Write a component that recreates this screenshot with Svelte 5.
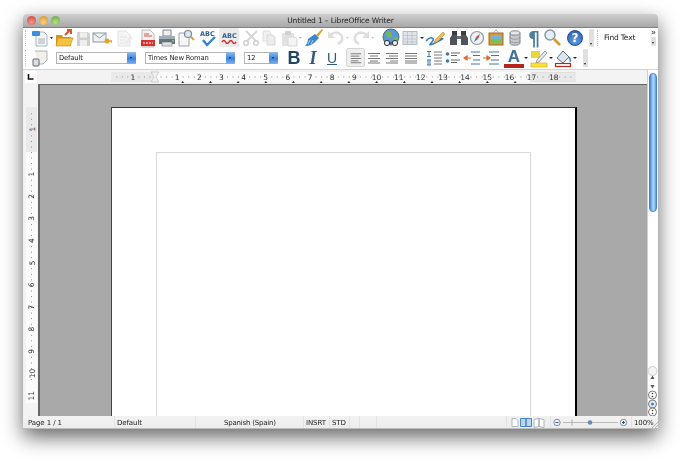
<script>
  const unit = 22.15;
  const hLabels = Array.from({ length: 18 }, (_, i) => i + 1);
  const vLabels = Array.from({ length: 11 }, (_, i) => i + 1);
  const hDots = Array.from({ length: 84 }, (_, i) => i * (unit / 4) + 118 - unit * 2);
  const vDots = Array.from({ length: 50 }, (_, i) => i * (unit / 4) + 68 - unit * 2);
  const tabs = Array.from({ length: 13 }, (_, i) => 118 + 27.7 * (i + 1));
</script>

<div class="desk">
  <div class="window">
    <header class="titlebar">
      <div class="lights">
        <span class="light red"></span>
        <span class="light yellow"></span>
        <span class="light green"></span>
      </div>
      <span class="title">Untitled 1 – LibreOffice Writer</span>
    </header>

    <div class="toolbar one">
      <span class="grip"></span>
      <svg width="18" height="20" viewBox="0 0 18 20"><path d="M5 4h8l3 3v11H5z" fill="#f4f6f8" stroke="#98a4b0" stroke-width=".8"/><path d="M7 11h7M7 13h7M7 15h7" stroke="#a8b2bc"/><rect x="1" y="3" width="8" height="5" rx="1" fill="#3b90dc"/></svg>
      <svg class="drop" width="5" height="20" viewBox="0 0 5 20"><path d="M1 9h3l-1.500 2z" fill="#222"/></svg>
      <svg width="20" height="20" viewBox="0 0 20 20"><path d="M2 7h6l1 2h8v9H2z" fill="#d6951f"/><path d="M4 10h15l-3 8H2z" fill="#f3c23e" stroke="#c88a18" stroke-width=".6"/><path d="M11 7l5-5M13 2h4v4" stroke="#d9552a" stroke-width="2" fill="none"/></svg>
      <svg width="18" height="20" viewBox="0 0 18 20"><path d="M3 4h11l2 2v12H3z" fill="#cfcfcf"/><rect x="6" y="4.500" width="7" height="5" fill="#f0f0f0"/><rect x="6" y="12" width="7" height="6" fill="#efefef"/></svg>
      <svg width="20" height="20" viewBox="0 0 20 20"><rect x="1" y="5" width="13" height="9" fill="#eef1f4" stroke="#8e9aa6"/><path d="M1 5l6.500 5L14 5" fill="none" stroke="#8e9aa6"/><circle cx="15" cy="13" r="2.500" fill="#e2a520"/><path d="M15 13h5v2" stroke="#e2a520" stroke-width="1.500" fill="none"/></svg>
      <svg class="m2" width="20" height="20" viewBox="0 0 20 20"><path d="M4 3h8l4 4v11H4z" fill="#f5f5f5" stroke="#e2e2e2"/><path d="M6 9h7M6 12h5M6 15h4" stroke="#e4e4e4"/><path d="M10 15l7-7 2 2-7 7z" fill="#ececec"/></svg>
      <svg class="m5" width="18" height="20" viewBox="0 0 18 20"><path d="M3 2h8l4 4v13H3z" fill="#f2f2f2" stroke="#aaa" stroke-width=".8"/><path d="M5 6h5M5 8h8" stroke="#c55"/><rect x="2" y="12" width="14" height="6" fill="#d8302a"/><path d="M4 15h10" stroke="#fff" stroke-dasharray="2 1"/></svg>
      <svg width="20" height="20" viewBox="0 0 20 20"><path d="M6 2h8v6H6z" fill="#eef0f2" stroke="#7d8790"/><path d="M2 8h16v8H2z" fill="#68737c"/><rect x="2" y="8" width="16" height="3" fill="#a2acb4"/><rect x="5" y="14" width="10" height="4" fill="#dfe2e4" stroke="#69727a" stroke-width=".6"/><rect x="15" y="12" width="2" height="1.500" fill="#7ed14c"/></svg>
      <svg width="18" height="20" viewBox="0 0 18 20"><path d="M2 5h7l3 3v10H2z" fill="#f6f6f6" stroke="#9aa2aa"/><circle cx="11" cy="6" r="3.500" fill="#d8e8f4" stroke="#7c8894" stroke-width="1.200"/><path d="M13.500 8.500L17 12" stroke="#d9a52a" stroke-width="2"/></svg>
      <svg class="m2" width="22" height="20" viewBox="0 0 22 20"><text x="3" y="8" class="abc">ABC</text><path d="M6 12l4 5 8-8" fill="none" stroke="#3c82cc" stroke-width="2.400"/></svg>
      <div class="pressed-icon"><svg width="20" height="20" viewBox="0 0 20 20"><text x="3" y="10" class="abc">ABC</text><path d="M3 14q2-3 3.500 0t3.500 0 3.500 0 3.500 0" fill="none" stroke="#d42a22" stroke-width="1.400"/></svg></div>
      <svg class="m2" width="20" height="20" viewBox="0 0 20 20"><path d="M16 3L6 13M5 3l10 10" stroke="#d4d4d4" stroke-width="1.800"/><circle cx="5" cy="15" r="2.300" fill="none" stroke="#cfcfcf" stroke-width="1.400"/><circle cx="15" cy="15" r="2.300" fill="none" stroke="#cfcfcf" stroke-width="1.400"/></svg>
      <svg width="16" height="20" viewBox="0 0 16 20"><path d="M2 3h6l2 2v8H2z" fill="#f1f1f1" stroke="#dcdcdc"/><path d="M6 7h6l2 2v8H6z" fill="#ececec" stroke="#d8d8d8"/></svg>
      <svg class="m2" width="20" height="20" viewBox="0 0 20 20"><rect x="3" y="5" width="12" height="13" rx="1" fill="#e2e2e2"/><rect x="6" y="3" width="6" height="4" rx="1" fill="#d0d0d0"/><path d="M9 9h7l2 2v7H9z" fill="#f4f4f4" stroke="#d6d6d6"/></svg>
      <svg class="drop" width="3" height="20" viewBox="0 0 3 20"><path d="M0 9h3l-1.500 2z" fill="#bbb"/></svg>
      <svg width="22" height="20" viewBox="0 0 22 20"><path d="M14 7l6-6 1 1-5 7z" fill="#d9a436"/><path d="M13 6l4 4-3 3q-4 5-11 5 3-3 3-7z" fill="#3f86cf"/><path d="M8 12l-2 4M11 12l-2 4" stroke="#a9cdf0"/></svg>
      <svg class="m2" width="20" height="20" viewBox="0 0 20 20"><path d="M4 7q7-5 11 0t-3 9" fill="none" stroke="#dedede" stroke-width="2.600"/><path d="M2 3v7h7z" fill="#dedede"/></svg>
      <svg class="drop" width="3" height="20" viewBox="0 0 3 20"><path d="M0 9h3l-1.500 2z" fill="#ccc"/></svg>
      <svg class="m2" width="20" height="20" viewBox="0 0 20 20"><path d="M16 7q-7-5-11 0t3 9" fill="none" stroke="#dedede" stroke-width="2.600"/><path d="M18 3v7h-7z" fill="#dedede"/></svg>
      <svg class="drop" width="3" height="20" viewBox="0 0 3 20"><path d="M0 9h3l-1.500 2z" fill="#ccc"/></svg>
      <svg class="m6" width="22" height="20" viewBox="0 0 22 20"><circle cx="11" cy="9" r="8" fill="#5a9bcf" stroke="#47708e"/><path d="M6 4q5-2 6 2t-5 4zM13 10q5-3 5 1t-4 3z" fill="#79b35a"/><circle cx="7" cy="15" r="2.600" fill="#eee" stroke="#333"/><circle cx="15" cy="15" r="2.600" fill="#eee" stroke="#333"/><path d="M9 15h4" stroke="#333"/></svg>
      <svg width="16" height="20" viewBox="0 0 16 20"><rect x="1" y="3.500" width="14" height="13" fill="#dfe5ea" stroke="#b4bcc4"/><path d="M1 7.500h14M1 11h14M1 14h14M5.500 4v12M10 4v12" stroke="#b4bcc4" stroke-width=".7"/></svg>
      <svg class="m2 drop" width="4" height="20" viewBox="0 0 4 20"><path d="M0 9h4l-2 2z" fill="#222"/></svg>
      <svg width="22" height="20" viewBox="0 0 22 20"><path d="M2 13q3-4 6-3t-1 5 6-1 3-3" fill="none" stroke="#2f7cc8" stroke-width="1.500"/><path d="M11 12l8-8 2 2-8 8-3 1z" fill="#eebd4a" stroke="#b4872c" stroke-width=".5"/></svg>
      <svg class="m2" width="22" height="20" viewBox="0 0 22 20"><rect x="4" y="3" width="5" height="5" fill="#3a3f44"/><rect x="13" y="3" width="5" height="5" fill="#3a3f44"/><path d="M4 7h5v10H2v-7z" fill="#4e5459"/><path d="M18 7h-5v10h7v-7z" fill="#4e5459"/><rect x="9" y="8" width="4" height="3" fill="#6a7075"/></svg>
      <svg width="14" height="20" viewBox="0 0 14 20"><circle cx="7" cy="10" r="6.500" fill="#eef0f2" stroke="#8f9aa4" stroke-width="1.200"/><path d="M10 6L6 9l2 2z" fill="#d3382c"/><path d="M4 14l4-3-2-2z" fill="#3d78c4"/></svg>
      <svg class="m4" width="16" height="20" viewBox="0 0 16 20"><rect x="1" y="5" width="14" height="12" fill="#d8973a" stroke="#a36d20"/><rect x="3" y="7" width="10" height="8" fill="#7cbf54"/><path d="M3 7h10v4H3z" fill="#72b4dc"/><path d="M5 5l3-3 3 3" fill="none" stroke="#999" stroke-width=".7"/></svg>
      <svg class="m3" width="16" height="20" viewBox="0 0 16 20"><path d="M3 5v10c0 3 10 3 10 0V5z" fill="#c6cbcf" stroke="#7f878e"/><ellipse cx="8" cy="5" rx="5" ry="2.200" fill="#e4e7e9" stroke="#7f878e"/><path d="M3 9c0 3 10 3 10 0M3 12.500c0 3 10 3 10 0" fill="none" stroke="#7f878e" stroke-width=".7"/></svg>
      <span class="m3 pilcrow">¶</span>
      <svg class="m1" width="18" height="20" viewBox="0 0 18 20"><circle cx="7" cy="7" r="5" fill="#e4f0f8" stroke="#8a96a2" stroke-width="1.500"/><path d="M11 11l6 6" stroke="#dc9a32" stroke-width="2.600"/></svg>
      <div class="m6 help"><span>?</span></div>
      <span class="m4 more-btn"></span>
      <span class="grip find-grip"></span>
      <span class="find">Find Text</span>
      <div class="overflow"><span class="chev">»</span><span class="more-btn small"></span></div>
    </div>

    <div class="toolbar two">
      <span class="grip wide"></span>
      <svg width="16" height="20" viewBox="0 0 16 20"><path d="M3 3h12v9l-4 4H6" fill="#f1f1ea" stroke="#9aa2aa" stroke-width=".8"/><rect x="1" y="11" width="6" height="7" rx="1" fill="#dce0e4" stroke="#5c6670"/></svg>
      <div class="select style-box"><span>Default</span><i></i></div>
      <div class="select font-box"><span>Times New Roman</span><i></i></div>
      <div class="select size-box"><span>12</span><i></i></div>
      <span class="fmt bold">B</span>
      <span class="fmt italic">I</span>
      <span class="fmt under">U</span>
      <div class="pressed">
        <svg width="18" height="18" viewBox="0 0 18 18"><path d="M4 4.500h11M4 7h9M4 9.500h11M4 12h8M4 14h11" stroke="#777"/></svg>
      </div>
      <svg width="18" height="20" viewBox="0 0 18 20"><path d="M3 5.500h12M5 8h8M3 10.500h12M5 13h8M3 15h12" stroke="#777"/></svg>
      <svg width="18" height="20" viewBox="0 0 18 20"><path d="M3 5.500h12M6 8h9M3 10.500h12M7 13h8M3 15h12" stroke="#777"/></svg>
      <svg width="20" height="20" viewBox="0 0 20 20"><path d="M4 5.500h12M4 8h12M4 10.500h12M4 13h12M4 15h12" stroke="#777"/></svg>
      <svg class="m3" width="20" height="20" viewBox="0 0 20 20"><path d="M3 3.500h4M5 3.500v5M3 8.500h4M3 12h4M4 12v5M6 12v5M3 17h4" stroke="#3c78a8"/><path d="M10 4h8M10 7h8M10 10h8M10 13h8M10 16h8" stroke="#7a7a7a"/></svg>
      <svg width="18" height="20" viewBox="0 0 18 20"><circle cx="3.500" cy="6" r="1.800" fill="#3c78a8"/><circle cx="3.500" cy="13" r="1.800" fill="#3c78a8"/><path d="M7 5h9M7 7.500h6M7 12h9M7 14.500h6" stroke="#666"/></svg>
      <svg width="20" height="20" viewBox="0 0 20 20"><path d="M9 4h9M11 7.500h7M11 12h7M9 16h9" stroke="#3c78a8"/><path d="M9 10H4M5 8l-3 2 3 2z" stroke="#e2662a" stroke-width="1.200" fill="#e2662a"/></svg>
      <svg width="18" height="20" viewBox="0 0 18 20"><path d="M7 4h10M9 7.500h8M9 12h8M7 16h10" stroke="#3c78a8"/><path d="M1 10h4M5 8l3 2-3 2z" stroke="#e2662a" stroke-width="1.200" fill="#e2662a"/></svg>
      <div class="m4 letter"><span>A</span></div>
      <svg class="drop" width="4" height="20" viewBox="0 0 4 20"><path d="M0 9h4l-2 2z" fill="#222"/></svg>
      <svg class="m1" width="20" height="20" viewBox="0 0 20 20"><rect x="2" y="3" width="9" height="7" fill="#e8d63a"/><path d="M8 12l8-9 2 2-8 9-3 1z" fill="#e8ecef" stroke="#6d7780" stroke-width=".7"/><rect x="2" y="15" width="16" height="4" fill="#f6e632" stroke="#e09a20" stroke-width=".6"/></svg>
      <svg class="drop" width="4" height="20" viewBox="0 0 4 20"><path d="M0 9h4l-2 2z" fill="#222"/></svg>
      <svg width="20" height="20" viewBox="0 0 20 20"><path d="M4 10l6-7 6 6-6 6z" fill="#dfe5ea" stroke="#5d7282"/><path d="M16 9q2 3 1 5" stroke="#4a8ac4" stroke-width="1.500" fill="none"/><rect x="2.500" y="15.500" width="15" height="3" fill="#fff" stroke="#b32a1c" stroke-width="1.200"/></svg>
      <svg class="drop" width="4" height="20" viewBox="0 0 4 20"><path d="M0 9h4l-2 2z" fill="#222"/></svg>
      <span class="more-btn tall"></span>
    </div>

    <div class="main">
      <div class="left">
        <div class="ruler-row">
          <div class="corner"><svg width="8" height="8" viewBox="0 0 8 8"><path d="M1.500 1v5h5" fill="none" stroke="#111" stroke-width="1.600"/></svg></div>
          <svg class="h-ruler" width="610" height="14" viewBox="0 0 610 14">
            <rect x="74" y="2" width="44" height="10" fill="#e9e9e9"/>
            <rect x="118" y="2" width="376" height="10" fill="#fbfbfb"/>
            <rect x="494" y="2" width="44" height="10" fill="#e9e9e9"/>
            {#each hDots as x}
              {#if x > 76 && x < 536}<rect x={x} y="6.500" width="1" height="1" fill="#8d8d8d"/>{/if}
            {/each}
            <text x="96" y="10" class="tick">1</text>
            {#each hLabels as n}
              <text x={118 + unit * n} y="10" class="tick">{n}</text>
            {/each}
            {#each tabs as x}
              <path d="M{x - 1.500} 13h3l-1.500-2z" fill="#333"/>
            {/each}
            <path d="M114 2h8l-3 5 3 5h-8l3-5z" fill="#f2f2f2" stroke="#bbb" stroke-width=".7"/>
            <rect x="494" y="2.500" width="44" height="9" fill="none" stroke="#e0e0e0"/>
          </svg>
        </div>
        <div class="doc-row">
          <svg class="v-ruler" width="14" height="332" viewBox="0 0 14 332">
            <rect x="2" y="23" width="11" height="45" fill="#e9e9e9"/>
            <rect x="2" y="68" width="11" height="251" fill="#fbfbfb"/>
            {#each vDots as y}
              {#if y > 25 && y < 318}<rect x="7" y={y} width="1" height="1" fill="#8d8d8d"/>{/if}
            {/each}
            <text class="tick" x="7.500" y="45" transform="rotate(-90 7.500 45)" dy="3">1</text>
            {#each vLabels as n}
              <text class="tick" x="7.500" y={68 + unit * n} transform="rotate(-90 7.500 {68 + unit * n})" dy="3">{n}</text>
            {/each}
          </svg>
          <div class="doc">
            <div class="page">
              <div class="margin"></div>
            </div>
          </div>
        </div>
      </div>
      <div class="scroll">
        <div class="thumb"></div>
        <svg class="scroll-btns" width="11" height="44" viewBox="0 0 11 44">
          <circle cx="5.500" cy="-1" r="4.500" fill="#f4f4f4" stroke="#ccc"/>
          <path d="M3.500 7h4l-2-3.500z" fill="#555"/>
          <path d="M3.500 13h4l-2 3.500z" fill="#555"/>
          <circle cx="5.500" cy="23" r="4" fill="#fff" stroke="#555" stroke-width=".8"/>
          <circle cx="5.500" cy="21.500" r=".8" fill="#333"/><circle cx="5.500" cy="24.500" r=".8" fill="#333"/>
          <circle cx="5.500" cy="32" r="4" fill="#e6eef6" stroke="#555" stroke-width=".8"/>
          <circle cx="5.500" cy="32" r="1.600" fill="#4d86bc"/>
          <circle cx="5.500" cy="40" r="4" fill="#fff" stroke="#555" stroke-width=".8"/>
          <circle cx="5.500" cy="38.500" r=".8" fill="#333"/><circle cx="5.500" cy="41.500" r=".8" fill="#333"/>
        </svg>
      </div>
    </div>

    <footer class="status">
      <div class="cell page-no">Page 1 / 1</div>
      <div class="cell style-name">Default</div>
      <div class="cell lang">Spanish (Spain)</div>
      <div class="cell insrt">INSRT</div>
      <div class="cell std">STD</div>
      <div class="cell s1"></div>
      <div class="cell s2"></div>
      <div class="cell s3"></div>
      <div class="cell views">
        <svg width="38" height="11" viewBox="0 0 38 11">
          <path d="M1 1.500h4l2 2v6H1z" fill="#fff" stroke="#9aa4ae" stroke-width=".8"/>
          <path d="M9.500 1.500h5.500v8H9.500zM15 1.500h5.500v8H15z" fill="#bcd6ee" stroke="#4a86c0"/>
          <path d="M23 2.500l5-1v8l-5 1zM28 1.500l5 1v8l-5-1z" fill="#fff" stroke="#9aa4ae" stroke-width=".8"/>
        </svg>
      </div>
      <div class="cell zoom-cell">
        <svg width="80" height="11" viewBox="0 0 80 11">
          <circle cx="6" cy="5.500" r="3.200" fill="#eef3f8" stroke="#6f8fae"/>
          <path d="M4.500 5.500h3" stroke="#446"/>
          <path d="M12 5.500h55" stroke="#bbb"/>
          <path d="M21 2.500v6" stroke="#aaa"/>
          <circle cx="39" cy="5.500" r="2.300" fill="#5d8fb8"/>
          <circle cx="72.500" cy="5.500" r="3.200" fill="#eef3f8" stroke="#6f8fae"/>
          <path d="M71 5.500h3M72.500 4v3" stroke="#446"/>
        </svg>
      </div>
      <div class="cell pct">100%</div>
      <svg class="resize" width="6" height="6" viewBox="0 0 6 6"><path d="M0 6l6-6M3 6l3-3" stroke="#999" stroke-width=".7"/></svg>
    </footer>
  </div>
</div>

<style>
  :global(body) {
    margin: 0;
    background: #fff;
  }

  .desk {
    width: 680px;
    height: 460px;
    padding: 14px 0 0 23px;
    box-sizing: border-box;
    overflow: hidden;
    font-family: 'DejaVu Sans', sans-serif;
    color: #222;
  }

  .window {
    position: relative;
    width: 635px;
    height: 415px;
    display: flex;
    flex-direction: column;
    background: #fff;
    border-radius: 4px 4px 0 0;
    box-shadow: 0 8px 20px rgba(0, 0, 0, 0.6);
  }

  .titlebar {
    height: 13px;
    flex: none;
    display: flex;
    align-items: center;
    justify-content: center;
    position: relative;
    border-radius: 4px 4px 0 0;
    background: linear-gradient(#cfcfcf, #a8a8a8);
    border-bottom: 1px solid #808080;
  }

  .lights {
    position: absolute;
    left: 4px;
    top: 2px;
    display: flex;
    gap: 3px;
  }

  .light {
    width: 9px;
    height: 9px;
    border-radius: 50%;
  }

  .red { background: radial-gradient(circle at 50% 70%, #f49a90, #cf3b33); }
  .yellow { background: radial-gradient(circle at 50% 70%, #f7d486, #d98c20); }
  .green { background: radial-gradient(circle at 50% 70%, #b8e090, #5fa238); }

  .title {
    font-size: 7.500px;
    letter-spacing: -0.15px;
    color: #222;
    filter: blur(0.25px);
  }

  .toolbar {
    display: flex;
    align-items: center;
    flex: none;
    height: 19px;
    padding-left: 2px;
    background: #fff;
  }

  .toolbar > *,
  .status > *,
  .h-ruler,
  .v-ruler {
    filter: blur(0.3px);
  }

  .two {
    height: 21px;
    padding-bottom: 1px;
    border-bottom: 1px solid #d4d4d4;
  }

  .grip {
    width: 1px;
    height: 16px;
    margin-right: 4px;
    border-left: 1px dotted #c4c4c4;
  }

  .grip.wide {
    margin-right: 5px;
  }

  .find-grip {
    margin: 0 5px 0 3px;
  }

  .m1 { margin-left: 1px; }
  .m2 { margin-left: 2px; }
  .m3 { margin-left: 3px; }
  .m4 { margin-left: 4px; }
  .m5 { margin-left: 5px; }
  .m6 { margin-left: 6px; }

  .drop {
    flex: none;
  }

  .abc {
    font-size: 6.500px;
    font-weight: 700;
    fill: #2f5f8e;
  }

  .pressed-icon {
    height: 19px;
    background: #ebebeb;
    border-radius: 2px;
    display: flex;
    align-items: center;
  }

  .pilcrow {
    width: 16px;
    font-size: 19px;
    font-weight: 700;
    line-height: 20px;
    text-align: center;
    color: #4f7f9c;
  }

  .help {
    width: 16px;
    height: 16px;
    margin-right: 2px;
    border-radius: 50%;
    background: radial-gradient(circle at 50% 70%, #6a9fe0, #1f57a8);
    border: 1px solid #1d4f96;
    box-sizing: border-box;
    display: flex;
    align-items: center;
    justify-content: center;
    color: #fff;
    font-size: 12px;
    font-weight: 700;
  }

  .more-btn {
    position: relative;
    width: 5px;
    height: 18px;
    margin-left: 4px;
    background: #e0e0e0;
    border-radius: 1px;
  }

  .more-btn::after {
    content: '';
    position: absolute;
    left: 1px;
    bottom: 2px;
    border: 1.500px solid transparent;
    border-top: 2px solid #222;
    border-bottom: 0;
  }

  .more-btn.tall {
    margin-left: 6px;
    height: 18px;
  }

  .find {
    font-size: 7.500px;
    letter-spacing: -0.2px;
    white-space: nowrap;
  }

  .overflow {
    margin-left: auto;
    margin-right: 2px;
    width: 5px;
    height: 20px;
    display: flex;
    flex-direction: column;
    align-items: center;
  }

  .chev {
    font-size: 8px;
    line-height: 9px;
    color: #222;
  }

  .more-btn.small {
    margin-left: 0;
    height: 9px;
    flex: none;
  }

  .select {
    height: 12px;
    display: flex;
    align-items: center;
    justify-content: space-between;
    border: 1px solid #b5b5b5;
    box-sizing: border-box;
    background: #fff;
    font-size: 6.800px;
    letter-spacing: -0.15px;
  }

  .select span {
    padding-left: 2px;
    white-space: nowrap;
  }

  .select i {
    position: relative;
    width: 9px;
    height: 12px;
    margin-right: -1px;
    border-radius: 0 2px 2px 0;
    background: linear-gradient(#8ebcf0, #3f84d8 55%, #7eb2ec);
  }

  .select i::after {
    content: '';
    position: absolute;
    left: 3px;
    top: 5px;
    border: 1.500px solid transparent;
    border-top: 2px solid #123;
    border-bottom: 0;
  }

  .style-box { width: 80px; margin-left: 8px; }
  .font-box { width: 90px; margin-left: 9px; }
  .size-box { width: 34px; margin-left: 9px; }

  .fmt {
    text-align: center;
    line-height: 20px;
    color: #2f5d7c;
  }

  .bold {
    width: 20px;
    margin-left: 6px;
    font-family: 'Liberation Sans', sans-serif;
    font-size: 18px;
    font-weight: 700;
    color: #1f4763;
  }

  .italic {
    width: 18px;
    font-family: 'Liberation Serif', serif;
    font-size: 18px;
    font-style: italic;
    font-weight: 700;
  }

  .under {
    width: 20px;
    font-family: 'Liberation Sans', sans-serif;
    font-size: 14px;
    text-decoration: underline;
  }

  .pressed {
    width: 19px;
    height: 19px;
    margin-left: 4px;
    box-sizing: border-box;
    background: #eeeeee;
    border: 1px solid #d6d6d6;
    border-radius: 2px;
    display: flex;
    align-items: center;
    justify-content: center;
  }

  .letter {
    width: 20px;
    height: 20px;
    display: flex;
    justify-content: center;
    box-sizing: border-box;
    border-bottom: 4px solid #b3261a;
    font-family: 'Liberation Sans', sans-serif;
    font-size: 17px;
    font-weight: 700;
    line-height: 17px;
    color: #3e7096;
  }

  .main {
    flex: 1;
    min-height: 0;
    display: flex;
  }

  .left {
    flex: 1;
    min-width: 0;
    display: flex;
    flex-direction: column;
  }

  .ruler-row {
    height: 14px;
    flex: none;
    display: flex;
    background: #f3f3f3;
  }

  .corner {
    width: 12px;
    height: 12px;
    margin: 1px 0 0 2px;
    background: #fff;
    display: flex;
    align-items: center;
    justify-content: center;
  }

  .h-ruler {
    flex: none;
    display: block;
  }

  .tick {
    font-size: 7.500px;
    text-anchor: middle;
    fill: #333;
  }

  .doc-row {
    flex: 1;
    min-height: 0;
    display: flex;
    background: #f3f3f3;
  }

  .v-ruler {
    flex: none;
    display: block;
    margin-left: 1px;
  }

  .doc {
    flex: 1;
    min-width: 0;
    overflow: hidden;
    padding: 22px 0 0 71px;
    background: #a9a9a9;
    border-top: 1px solid #666;
    border-left: 2px solid #666;
  }

  .page {
    width: 466px;
    height: 320px;
    padding: 44px 0 0 44px;
    box-sizing: border-box;
    background: #fff;
    border-top: 1px solid #333;
    border-left: 1px solid #444;
    border-right: 2px solid #000;
  }

  .margin {
    width: 375px;
    height: 280px;
    border: 1px solid #d9d9d9;
    box-sizing: border-box;
  }

  .scroll {
    width: 11px;
    flex: none;
    display: flex;
    flex-direction: column;
    align-items: center;
    background: #fff;
    border-left: 1px solid #d0d0d0;
    box-sizing: border-box;
  }

  .thumb {
    width: 8px;
    height: 139px;
    margin-top: 3px;
    border-radius: 4px;
    border: 1px solid #4a82c8;
    box-sizing: border-box;
    background: linear-gradient(90deg, #3f86dc, #b8dcf8 55%, #5c9ce4);
  }

  .scroll-btns {
    margin-top: auto;
    margin-left: -1px;
    overflow: visible;
    display: block;
  }

  .status {
    height: 13px;
    flex: none;
    display: flex;
    position: relative;
    background: linear-gradient(#f2f2f2, #ececec);
    border-bottom: 1px solid #bdbdbd;
    box-sizing: border-box;
    font-size: 7px;
    letter-spacing: -0.1px;
    line-height: 12px;
  }

  .cell {
    box-sizing: border-box;
    white-space: nowrap;
    border-right: 1px solid #e2e2e2;
    display: flex;
    align-items: center;
    padding-top: 2px;
  }

  .page-no { width: 92px; padding-left: 5px; }
  .style-name { width: 81px; padding-left: 2px; }
  .lang { width: 108px; padding-left: 28px; letter-spacing: -0.2px; }
  .insrt { width: 26px; padding-left: 2px; }
  .std { width: 20px; padding-left: 2px; }
  .s1 { width: 10px; }
  .s2 { width: 17px; }
  .s3 { width: 130px; }
  .views { width: 44px; padding-left: 4px; padding-top: 0; }
  .zoom-cell { width: 81px; padding-left: 0; padding-top: 0; }
  .pct { border: 0; padding-left: 2px; }

  .resize {
    position: absolute;
    right: 0;
    bottom: 0;
  }
</style>
